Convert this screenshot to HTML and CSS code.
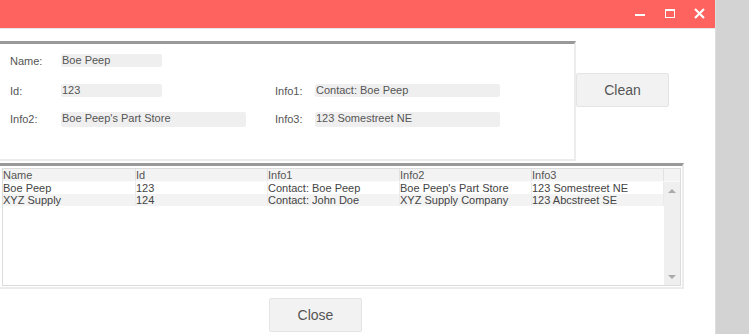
FILE: index.html
```html
<!DOCTYPE html>
<html>
<head>
<meta charset="utf-8">
<link rel="stylesheet" href="styles.css">
</head>
<body>
<div class="screen">
  <div class="window">
    <div class="titlebar">
      <span class="tb-icon tb-min"></span>
      <span class="tb-icon tb-max"></span>
      <svg class="tb-icon tb-close" width="11" height="11" viewBox="0 0 11 11"><path d="M1 1L10 10M10 1L1 10" stroke="#fff" stroke-width="2.2" fill="none"/></svg>
    </div>
    <div class="content">
      <div class="top-row">
        <div class="panel form-panel">
          <div class="form-grid">
            <span class="lbl">Name:</span><span class="field w100">Boe Peep</span><span></span><span></span><span></span>
            <span class="lbl">Id:</span><span class="field w100">123</span><span></span><span class="lbl">Info1:</span><span class="field">Contact: Boe Peep</span>
            <span class="lbl">Info2:</span><span class="field">Boe Peep's Part Store</span><span></span><span class="lbl">Info3:</span><span class="field">123 Somestreet NE</span>
          </div>
        </div>
        <button class="btn clean-btn">Clean</button>
      </div>
      <div class="panel table-panel">
        <div class="table-box">
          <div class="t-head">
            <span class="c">Name</span><span class="c">Id</span><span class="c">Info1</span><span class="c">Info2</span><span class="c">Info3</span><span class="c sb-head"></span>
          </div>
          <div class="t-body">
            <div class="rows">
              <div class="t-row"><span class="c">Boe Peep</span><span class="c">123</span><span class="c">Contact: Boe Peep</span><span class="c">Boe Peep's Part Store</span><span class="c">123 Somestreet NE</span></div>
              <div class="t-row alt"><span class="c">XYZ Supply</span><span class="c">124</span><span class="c">Contact: John Doe</span><span class="c">XYZ Supply Company</span><span class="c">123 Abcstreet SE</span></div>
            </div>
            <div class="scrollbar">
              <span class="arrow up"></span>
              <span class="arrow down"></span>
            </div>
          </div>
        </div>
      </div>
      <div class="footer">
        <button class="btn close-btn">Close</button>
      </div>
    </div>
  </div>
  <div class="side"></div>
</div>
</body>
</html>
```
FILE: styles.css
```css
html, body {
  margin: 0;
  padding: 0;
  background: #fff;
}
body {
  font-family: "Liberation Sans", Arial, sans-serif;
  color: #555;
  overflow: hidden;
}
.screen {
  display: flex;
  width: 749px;
  height: 334px;
}
.window {
  width: 715px;
  height: 334px;
  display: flex;
  flex-direction: column;
  background: #fff;
}
.side {
  width: 34px;
  height: 334px;
  background: #d3d3d3;
  border-left: 1px solid #dedede;
  box-sizing: border-box;
}
.titlebar {
  height: 28px;
  background: #ff635f;
  border-bottom: 1px solid #e6e6e6;
  display: flex;
  align-items: center;
  justify-content: flex-end;
  padding-right: 10px;
}
.tb-icon {
  display: block;
}
.tb-min {
  width: 10px;
  height: 2px;
  background: #fff;
  margin-top: 2px;
  margin-right: 20px;
}
.tb-max {
  width: 10px;
  height: 9px;
  box-sizing: border-box;
  border: 1px solid #fff;
  border-top-width: 2px;
  margin-top: -1px;
  margin-right: 19px;
}
.tb-close {
  margin-top: -2px;
}
.content {
  display: flex;
  flex-direction: column;
  padding-top: 12px;
}
.top-row {
  display: flex;
  align-items: flex-start;
}
.panel {
  background: #fff;
  border-top: 3px solid #999;
  border-right: 2px solid #ececec;
  border-bottom: 2px solid #ececec;
}
.form-panel {
  width: 574px;
  height: 115px;
}
.form-grid {
  display: grid;
  grid-template-columns: 51px 185px 29px 40px 185px;
  grid-template-rows: 13px 13px 13px;
  row-gap: 17px;
  padding: 10px 0 0 10px;
  font-size: 11px;
  line-height: 13px;
}
.form-grid .lbl:nth-child(11) { }
.form-grid > :nth-child(n+11) { margin-top: -2px; }
.lbl {
  color: #555;
  padding-top: 1px;
}
.field {
  display: block;
  background: #efefef;
  border-radius: 2px;
  padding-left: 1px;
  color: #555;
  white-space: nowrap;
}
.w100 {
  width: 100px;
}
.btn {
  font-family: "Liberation Sans", Arial, sans-serif;
  font-size: 14px;
  color: #555;
  background: #f2f2f2;
  border: 1px solid #e4e4e4;
  border-radius: 2px;
  width: 93px;
  height: 34px;
  padding: 0;
}
.clean-btn {
  margin-top: 32px;
}
.table-panel {
  width: 682px;
  margin-top: 2px;
  padding: 2px 1px 1px 2px;
  box-sizing: border-box;
  width: 684px;
}
.table-box {
  border: 1px solid #dcdcdc;
  height: 118px;
  box-sizing: border-box;
  display: flex;
  flex-direction: column;
  font-size: 11px;
  line-height: 12px;
  color: #444;
}
.t-head, .t-row {
  display: grid;
  grid-template-columns: 133px 132px 132px 132px 132px;
}
.t-head {
  grid-template-columns: 133px 132px 132px 132px 132px 16px;
  background: #f3f3f3;
  height: 13px;
  border-bottom: 1px solid #fafafa;
  box-sizing: border-box;
  color: #555;
}
.c {
  display: block;
  border-right: 1px solid #e2e2e2;
  white-space: nowrap;
  overflow: hidden;
}
.t-head .c {
  line-height: 12px;
}
.sb-head {
  border-right: none;
}
.t-body {
  flex: 1;
  display: flex;
}
.rows {
  flex: 1;
}
.t-row {
  height: 12px;
}
.t-row .c {
  border-right-color: #ebebeb;
}
.alt {
  background: #f3f3f3;
}
.scrollbar {
  width: 16px;
  background: #efefef;
  display: flex;
  flex-direction: column;
  justify-content: space-between;
  align-items: center;
  padding: 7px 0 6px;
  box-sizing: border-box;
}
.arrow {
  width: 0;
  height: 0;
  border-left: 4px solid transparent;
  border-right: 4px solid transparent;
}
.arrow.up {
  border-bottom: 4px solid #aaa;
}
.arrow.down {
  border-top: 4px solid #aaa;
}
.footer {
  padding-top: 9px;
  padding-left: 269px;
}
```
